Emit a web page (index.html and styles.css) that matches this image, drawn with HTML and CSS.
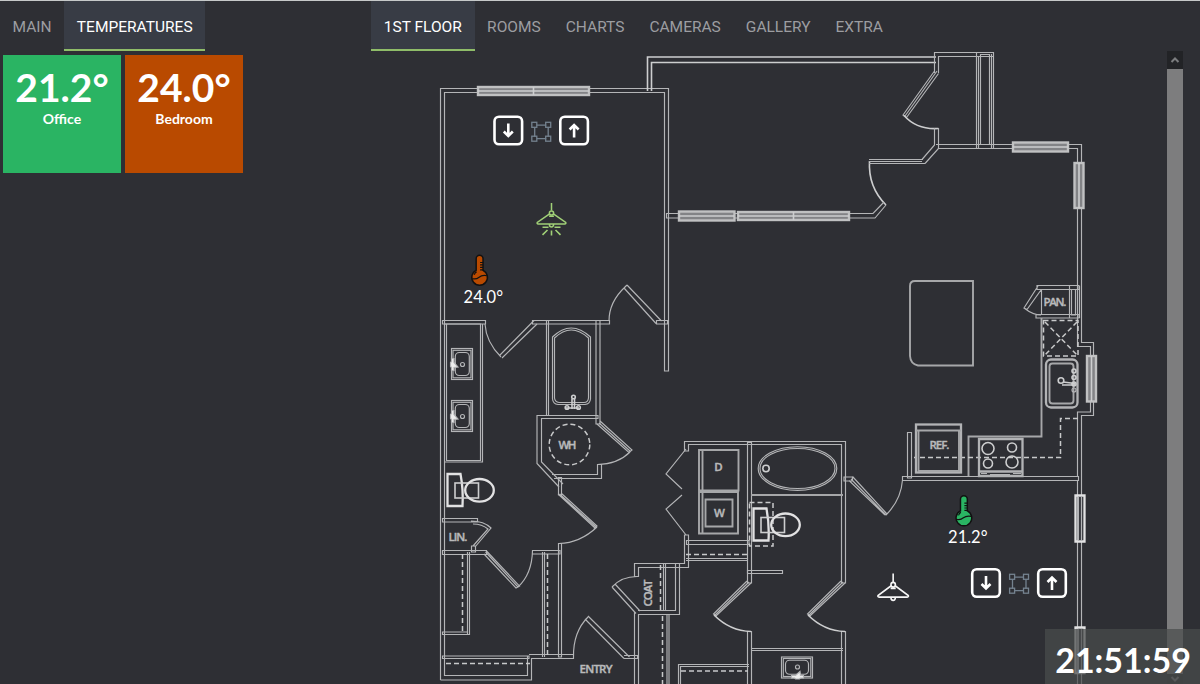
FILE: index.html
```html
<!DOCTYPE html>
<html lang="en">
<head>
<meta charset="utf-8">
<title>Home dashboard</title>
<link rel="stylesheet" href="styles.css">
</head>
<body>
<div class="dashboard">
  <section class="side">
    <nav class="tabs">
      <a class="tab">MAIN</a>
      <a class="tab active">TEMPERATURES</a>
    </nav>
    <div class="tiles">
      <div class="tile tile-green"><div class="tile-value">21.2°</div><div class="tile-name">Office</div></div>
      <div class="tile tile-orange"><div class="tile-value">24.0°</div><div class="tile-name">Bedroom</div></div>
    </div>
  </section>
  <section class="main">
    <nav class="tabs">
      <a class="tab active">1ST FLOOR</a>
      <a class="tab">ROOMS</a>
      <a class="tab">CHARTS</a>
      <a class="tab">CAMERAS</a>
      <a class="tab">GALLERY</a>
      <a class="tab">EXTRA</a>
    </nav>
    <div class="content">
      <svg class="plan" viewBox="371 51 796 633" width="796" height="633">
        <defs>
          <g id="btn"><rect x="1.2" y="1.2" width="27.6" height="27.6" rx="4.5"/></g>
          <g id="scene"><path d="M5.5 3.5H15M5.5 17H15M3.500 5.500V15M17 5.500V15"/><rect x=".6" y=".6" width="5" height="5"/><rect x="14.500" y=".6" width="5" height="5"/><rect x=".6" y="14.500" width="5" height="5"/><rect x="14.500" y="14.500" width="5" height="5"/></g>
          <g id="lamp"><path d="M16 0V8"/><circle cx="16" cy="10.500" r="2.200"/><path d="M14 11.500L1 20.500Q.5 22 2 22H30Q31.500 22 31 20.500L18 11.500M13.500 14H18.500M13.800 22.500a2.200 2.700 0 0 0 4.400 0"/></g>
          <g id="thermo"><path d="M6.500 5.500a3.500 3.500 0 0 1 7 0V17.500a8 8 0 1 1-7 0Z" stroke="#111" stroke-width="1.500"/><path d="M13.500 9.500H10.500M13.500 12H10.500M13.500 14.500H10.500M13.500 17H10.500M2.500 26q4 1 7-1.500t8-1.500M4.500 22q1-2.500 2.500-3" fill="none" stroke="#111" stroke-width="1.200"/></g>
          <g id="basin"><rect x="0" y="0" width="21" height="31"/><rect x="1.500" y="1.800" width="18" height="27.500"/><rect x="3.800" y="4" width="14" height="23" rx="4"/><circle cx="11" cy="16" r="2"/><path class="solid" d="M0 10h2.500v4l4 4.500-4 .5v3H0V19l-1-1v-4l1-1Z"/></g>
          <g id="toilet"><path class="bold" d="M0 0H13Q16 16 15 32H0Z"/><rect class="mid" x="7.500" y="9" width="23.500" height="15"/><ellipse class="bold" cx="32" cy="16.300" rx="14.300" ry="11.300"/></g>
        </defs>

        <g class="walls">
          <!-- bedroom -->
          <path d="M440.500 680V88.500H668.500V371H664.500V92.500H444.500V675.500H527.500V656M440.500 680H531.500V658.500"/>
          <path d="M442.500 320.500H485.500V324H442.500ZM532.500 320.500H609.500V324H532.500ZM656.500 320.500H667.500V324H656.500Z"/>
          <path d="M485 324Q486 342 501 357M500 355L534 320.500M502 358L537 324M609 321Q609 302 625 287M624 288L656 323.500M627 285L661.500 321M624 288L627 285"/>
          <!-- balcony -->
          <path class="mid" d="M647.500 91V57H936M651.500 91V62.500H936"/>
          <path d="M934.500 73V52.500H993.500V148.500H976.500V52.500M938.500 73V56.500H993M978.500 56V148M980.500 144.500V54.500H989.500V144.500ZM991.500 54V148M934.500 71L903 115L906.500 117.500L938.500 73.500"/>
          <path d="M937 71L905 116"/>
          <path class="mid" d="M904 115.500Q917 130 938.500 128.500M869.500 161Q868 187 886 205"/>
          <path d="M934.500 128V145L922 159.500M938.500 128V148.500L925 163.500M936 144.500H1081.500V342.500H1093.500V356M938 148.500H1077.500V346.500H1090.500V356M869 159.500H923M869 161.500H922M869 163.500H925M884 202L873 213.500H666.500V218H875L886 205"/>
          <!-- living room east wall -->
          <path d="M1093.500 402V415.500H1081.500V684M1090.500 402V412H1077.500V476M1077.500 480V684"/>
          <path d="M907.500 432.500H911.500V478H907.500ZM902.500 476.500H1078.500V480.500H902.500ZM902.500 480Q901 500 886 515M844 477H852.500V481H844ZM852.500 476.500L887 514M849 480.500L885 515M851 479L886 515"/>
          <!-- pantry -->
          <path d="M1037 285.500H1079V289.500H1037ZM1036 314.500H1079V318H1036ZM1041.500 289V314M1069.500 286V318M1071.500 289V315H1075.500V289M1079.500 286V318M1038 286L1024 308L1027 309.500L1041 290M1024 308Q1033 315 1041 315"/>
          <!-- counter and island -->
          <path class="soft" d="M1041.500 318V436.500H968.500V476"/>
          <path class="soft" d="M915 281H973V365.500H918Q910.500 364 910 356V286Q910 281 915 281Z"/>
          <path class="dash" d="M1043.500 320.500H1078V356H1043.500ZM1045 322L1077 355M1077 322L1045 355"/>
          <path class="dash" d="M1078 418.500H1060.500V457.500H914"/>
          <rect class="thick" x="1046" y="359.500" width="31.500" height="48" rx="5"/>
          <rect class="soft" x="1049.500" y="363.500" width="24" height="40" rx="3"/>
          <path class="mid" d="M1063 382L1075 383.500M1062 385H1075"/><circle class="mid" cx="1061" cy="380.500" r="2.800"/><circle class="mid" cx="1074" cy="371" r="2"/><circle class="mid" cx="1074" cy="377.500" r="2"/><circle class="mid" cx="1074" cy="384" r="2"/><circle cx="1074" cy="390" r="2"/>
          <rect class="thick" x="916" y="424.500" width="45" height="48"/><path class="soft" d="M916 430.500H961M918.500 431V471H959V431"/>
          <path class="thick" d="M979 439H1022.500V476H979ZM979 471.500H1022"/><path d="M981 473.500H987M990 474.500H1010M1013 473.500H1021"/>
          <g class="mid"><circle cx="988" cy="448.500" r="6"/><circle cx="1012" cy="447.500" r="4.500"/><circle cx="988" cy="463.500" r="4.500"/><circle cx="1012" cy="462" r="6"/></g>
          <!-- laundry -->
          <path d="M684.500 451V441.500H845.500V583H841.500V444.500H688.500V451ZM747.500 583V442.500H751.500V583ZM747.500 684V631.500H751.500V684M841.500 684V631.500H845.500V684"/>
          <path d="M686 449L666 474L682 489M682 495L666 509L686 535"/>
          <path class="soft" d="M699 450H738.500V490.500H699ZM699 492H738V533.500H699Z"/><path class="soft" d="M702.500 450V533M705.500 499.500H732.500V526.500H705.500Z"/>
          <path d="M684.500 535H688.500V567.500H638.500V576.500H634.500V563.500H684.500ZM686.500 540.500H749V544.500H686.500ZM686 558.500H748M686 560.500H748"/>
          <path class="dash" d="M686 554.500H748"/>
          <!-- coat closet -->
          <path d="M663.500 564V610M665.500 564V610M675.500 564V610.500H638M679.500 564V614.500H638.500V684M634.500 684V612M667 614V684M669 614V684M612 587L636 613.500M615 584L640 611M612 587Q622 576 638.500 576.500"/>
          <path class="dash" d="M660.500 565V612M662.500 616V684"/>
          <path d="M678.500 684V664.500H749M680.500 684V666.500H749"/>
          <path class="dash" d="M681 671H748"/>
          <!-- second bathroom -->
          <ellipse cx="797.500" cy="468.500" rx="39.300" ry="21.800"/><ellipse cx="797.500" cy="468.500" rx="37.500" ry="20"/><circle class="mid" cx="766" cy="468.500" r="3.200"/>
          <path class="soft" d="M751 495H843"/>
          <path class="dash" d="M749.500 502.500H773V546H749.500Z"/>
          <path d="M747.500 570.500H782.500V573.500H747.500ZM751 648.500H843M751 650.500H843"/>
          <path d="M747 581L713.500 614L716 616L751 583M749 582L715 615M841 581L807.500 614L810 616L845 583M843 582L809 615"/>
          <path class="mid" d="M714 615Q730 631 751 631.500M808 615Q824 631 845 631.500"/>
          <use href="#toilet" transform="translate(753.500 508.500)"/>
          <use href="#basin" transform="translate(781.500 678) rotate(-90)"/>
          <!-- master bathroom -->
          <path d="M444.500 324H480.500V460.500H446.500V324M482.500 324V462H444.500"/>
          <use href="#basin" transform="translate(451.500 348.500)"/><use href="#basin" transform="translate(451.500 400.500)"/>
          <path d="M546.500 321V415M548.500 321V415M596 321V424H600V321M552.500 337Q571 319 590.500 337V399Q590 404 585 404.500H558Q553 404 552.500 399ZM554.500 338Q571 322 588.500 338V398Q588 402.500 584 402.500H559Q555 402 554.500 398Z"/>
          <circle class="mid" cx="573.500" cy="397" r="1.800"/><circle class="mid" cx="567" cy="407.500" r="1.800"/><circle class="mid" cx="578.500" cy="407.500" r="1.800"/><path class="mid" d="M572 399V409M574.500 399V409M566 408H579"/>
          <path d="M597.500 415.500H537V463.500L559 487M598 418.500H541.500V462L563 484M552 474.500H597.500V464.500H601.500V478.500H554M598 415V419M600 421L632 450L629 452.500L597 424M599 423L630 451"/>
          <path d="M630 452Q618 464 597.500 464.500"/>
          <circle class="dash" cx="569.500" cy="444.500" r="20.300"/>
          <path d="M558.500 477.500H561.500V495H558.500ZM558 494L595 528M561 493L597 526L594 529M559.500 494L596 527M597 527Q580 543 559 543.500"/>
          <use href="#toilet" transform="translate(447.500 474)"/>
          <!-- linen and walk-in closets -->
          <path d="M442.500 518.500H477.500V522H442.500ZM471 521Q484 521 491 528L475 547M473 524Q482 524 488 529L473 546M471.500 546H475.500V552H471.500ZM442.500 550.500H486.500V554.500H442.500ZM484 554L516 588L519.500 586L486.500 551M485.500 552L518 587M518 587Q532 574 532.500 550.500H560V554H532.500M467.500 552V634M469.500 552V634.500H442.500V632H467M442.500 656H529V658.500H442.500Z"/>
          <path d="M542.500 552V657M544.500 552V657M558.500 657V543.500H561.500V657ZM529 654.500H573.500V658.500H531M573.500 657Q573 632 588 617M585 619L624 658.500M588 616L629.500 657M624 655.500H637.500V658.500H624"/>
          <path class="dash" d="M462.500 554V632M547.500 554V656M446 663.500H530"/>
        </g>

        <g class="windows">
          <rect x="478" y="87" width="111" height="8"/><rect x="679" y="211.500" width="55.500" height="9"/><rect x="738" y="212" width="111" height="8"/><rect x="1013" y="142.500" width="55" height="9"/><rect x="1074.500" y="163" width="9" height="45"/><rect x="1087" y="356" width="9" height="45.500"/>
        </g>
        <g class="walls"><path class="mid" d="M478 91H589M679 216H734M738 216H849M1013 147H1068M1079 163V208M1091.500 356V401M533.500 87V95M793.500 212V220"/><path class="bold" d="M1075.500 495.500H1084.500V541.500H1075.500ZM1075.500 627.500H1084.500V673H1075.500Z"/><path d="M1078.500 496V541M1081.500 496V541M1078.500 628V672M1081.500 628V672"/></g>

        <g class="labels">
          <text x="1055" y="306" textLength="23">PAN.</text>
          <text x="939.500" y="448.500" textLength="20">REF.</text>
          <text x="718.500" y="471">D</text>
          <text x="719.500" y="516.500">W</text>
          <text x="567.500" y="449.300" textLength="18">WH</text>
          <text x="458" y="541" textLength="19">LIN.</text>
          <text x="596" y="673" textLength="33">ENTRY</text>
          <text transform="translate(652 593) rotate(-90)" textLength="27">COAT</text>
        </g>

        <g class="controls">
          <g transform="translate(493.300 115.500)"><use href="#btn"/><path d="M15 8V20M10.500 16L15 20.500L19.500 16"/></g>
          <g transform="translate(559.100 115.500)"><use href="#btn"/><path d="M15 22V10M10.500 14L15 9.500L19.500 14"/></g>
          <g transform="translate(971 568)"><use href="#btn"/><path d="M15 8V20M10.500 16L15 20.500L19.500 16"/></g>
          <g transform="translate(1037 568)"><use href="#btn"/><path d="M15 22V10M10.500 14L15 9.500L19.500 14"/></g>
        </g>
        <g class="scenes"><use href="#scene" x="531.200" y="121.700"/><use href="#scene" x="1009" y="573.700"/></g>

        <g class="lamp lamp-on"><use href="#lamp" transform="translate(536.300 203) scale(.95)"/><path d="M542.500 227.300H548.500M554.500 227.300H560.500M547.500 230L542.500 234.800M551.500 230.500V235.500M555.500 230L560.500 234.800"/></g>
        <g class="lamp"><use href="#lamp" transform="translate(877 573.500) scale(1.010 1.070)"/></g>

        <use class="thermo-orange" href="#thermo" transform="translate(469.800 253.200) scale(.98)"/>
        <use class="thermo-green" href="#thermo" transform="translate(954.100 493.800) scale(.98)"/>
        <g class="readings"><text x="483.300" y="302.600">24.0°</text><text x="967.800" y="543.400">21.2°</text></g>
      </svg>
      <div class="scrollbar">
        <div class="arrow"><svg width="10" height="8" viewBox="0 0 10 8"><path d="M1.500 6L5 2.500L8.500 6"/></svg></div>
        <div class="thumb"></div>
        <div class="arrow arrow-down"><svg width="10" height="8" viewBox="0 0 10 8"><path d="M1.500 2L5 5.500L8.500 2"/></svg></div>
      </div>
    </div>
  </section>
</div>
<div class="clock">21:51:59</div>
</body>
</html>
```
FILE: styles.css
```css
* { box-sizing: border-box; }
body { margin: 0; height: 684px; overflow: hidden; background: #2e2f34; font-family: Lato, sans-serif; color: #fff; }
.dashboard { display: flex; height: 684px; border-top: 1px solid #c6c9c9; }
.side { width: 371px; }
.main { flex: 1; }
.tabs { display: flex; height: 50px; }
.tab { padding: 0 12.500px; height: 50px; font: 400 15.500px/53px Roboto, sans-serif; color: #9c9da1; white-space: nowrap; }
.tab.active { background: #383c45; color: #fff; border-bottom: 2px solid #8fbd69; padding: 0 12.800px; }
.tiles { display: flex; gap: 4px; padding: 4px 3px; }
.tile { width: 118px; height: 118px; text-align: center; }
.tile-green { background: #2ab463; }
.tile-orange { background: #b94a00; }
.tile-value { font-weight: 700; font-size: 39px; line-height: 46px; margin-top: 9px; }
.tile-name { font-weight: 700; font-size: 14px; line-height: 18px; }
.content { display: flex; height: 633px; }
.plan { display: block; flex: none; fill: none; }
.walls { stroke: #b4b5b7; stroke-width: 1.150; }
.mid { stroke: #cdcecf; stroke-width: 1.600; }
.soft { stroke: #a6a7a9; stroke-width: 1.900; }
.thick { stroke: #b2b3b5; stroke-width: 2.300; }
.bold { stroke: #e2e2e3; stroke-width: 2.300; }
.solid { fill: #eee; }
.dash { stroke: #c8c9ca; stroke-width: 1.500; stroke-dasharray: 5 3; }
.windows { fill: #828386; stroke: #c0c1c2; stroke-width: 2.400; }
.labels { fill: #b9babb; stroke: #b9babb; stroke-width: .4; font: 600 11.500px "Open Sans", sans-serif; text-anchor: middle; }
.controls { stroke: #fff; stroke-width: 2.600; }
.scenes { stroke: #74828f; stroke-width: 1.300; }
.lamp { stroke: #f6f6f6; stroke-width: 1.600; }
.lamp-on { stroke: #a0d077; }
.thermo-orange { fill: #b94a00; }
.thermo-green { fill: #2ab463; }
.readings { fill: #fff; font: 400 16.500px Lato, sans-serif; text-anchor: middle; }
.scrollbar { display: flex; flex-direction: column; width: 16px; }
.arrow { height: 18px; background: #222326; display: flex; align-items: center; justify-content: center; }
.arrow path { fill: none; stroke: #7b7c7e; stroke-width: 2; }
.arrow-down { height: 10px; background: #2a2b2d; }
.thumb { flex: 1; background: #7d7d7e; }
.clock { position: absolute; right: 0; bottom: 0; width: 155px; height: 55px; padding-right: 9px; text-align: right; background: rgba(74, 76, 76, .72); font-weight: 700; font-size: 34px; line-height: 61px; }
```
